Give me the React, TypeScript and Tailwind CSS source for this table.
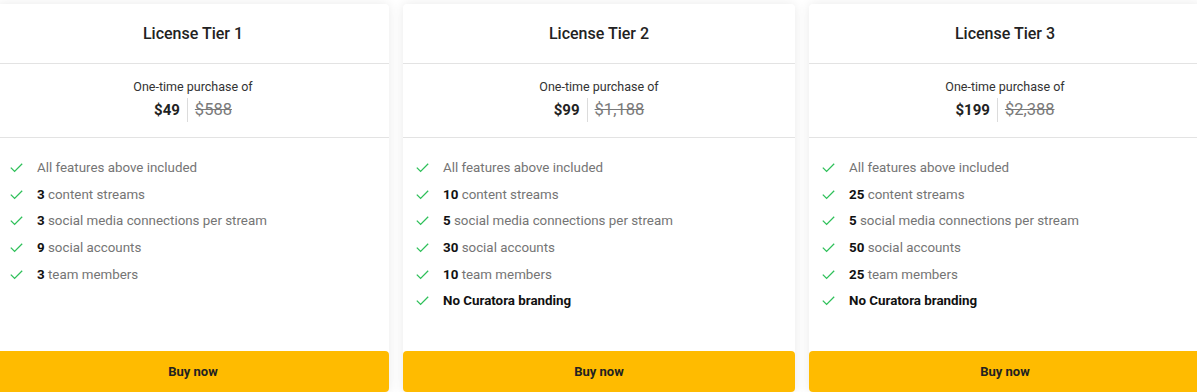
import React from "react";

type Feature = { bold?: string; text?: string; allBold?: string };

type Tier = {
  name: string;
  price: string;
  was: string;
  features: Feature[];
};

const tiers: Tier[] = [
  {
    name: "License Tier 1",
    price: "$49",
    was: "$588",
    features: [
      { text: "All features above included" },
      { bold: "3", text: "content streams" },
      { bold: "3", text: "social media connections per stream" },
      { bold: "9", text: "social accounts" },
      { bold: "3", text: "team members" },
    ],
  },
  {
    name: "License Tier 2",
    price: "$99",
    was: "$1,188",
    features: [
      { text: "All features above included" },
      { bold: "10", text: "content streams" },
      { bold: "5", text: "social media connections per stream" },
      { bold: "30", text: "social accounts" },
      { bold: "10", text: "team members" },
      { allBold: "No Curatora branding" },
    ],
  },
  {
    name: "License Tier 3",
    price: "$199",
    was: "$2,388",
    features: [
      { text: "All features above included" },
      { bold: "25", text: "content streams" },
      { bold: "5", text: "social media connections per stream" },
      { bold: "50", text: "social accounts" },
      { bold: "25", text: "team members" },
      { allBold: "No Curatora branding" },
    ],
  },
];

function Check() {
  return (
    <svg width="13" height="10" viewBox="0 0 13 10" fill="none" className="shrink-0">
      <path d="M0.8 4.6 L4.6 8.4 L12.2 0.8" stroke="#2fc05a" strokeWidth="1.3" />
    </svg>
  );
}

function Card({ tier }: { tier: Tier }) {
  return (
    <div className="w-[392px] h-[388px] shrink-0 bg-white rounded-[4px] shadow-[0_0_12px_rgba(0,0,0,0.09)] flex flex-col overflow-hidden">
      <div className="h-[60px] flex items-center justify-center border-b border-[#e3e3e3] text-[16px] font-medium text-[#222]">
        {tier.name}
      </div>
      <div className="h-[74px] pt-[15px] border-b border-[#e3e3e3] flex flex-col items-center">
        <div className="text-[12.5px] leading-[16px] text-[#333]">One-time purchase of</div>
        <div className="mt-[3px] h-[24px] flex items-center">
          <span className="text-[15px] font-bold text-[#222] pr-[7px]">{tier.price}</span>
          <span className="w-px h-[24px] bg-[#dcdcdc]" />
          <span className="text-[16.5px] text-[#7a7a7a] line-through pl-[7px]">{tier.was}</span>
        </div>
      </div>
      <ul className="pt-[17px] pl-[13px]">
        {tier.features.map((f, i) => (
          <li key={i} className="h-[26.6px] flex items-center gap-[14px] text-[13.35px]">
            <Check />
            {f.allBold ? (
              <span className="font-bold text-[#111]">{f.allBold}</span>
            ) : (
              <span className="text-[#757575]">
                {f.bold && <b className="font-bold text-[#111]">{f.bold} </b>}
                {f.text}
              </span>
            )}
          </li>
        ))}
      </ul>
      <button className="mt-auto h-[41px] w-full bg-[#ffbb00] rounded-t-[4px] text-[13px] font-bold text-[#222]">
        Buy now
      </button>
    </div>
  );
}

export default function App() {
  return (
    <div className="w-[1197px] h-[392px] overflow-hidden bg-white font-['Roboto',sans-serif]">
      <div className="flex gap-[14px] ml-[-3px] pt-[4px]">
        {tiers.map((t) => (
          <Card key={t.name} tier={t} />
        ))}
      </div>
    </div>
  );
}
